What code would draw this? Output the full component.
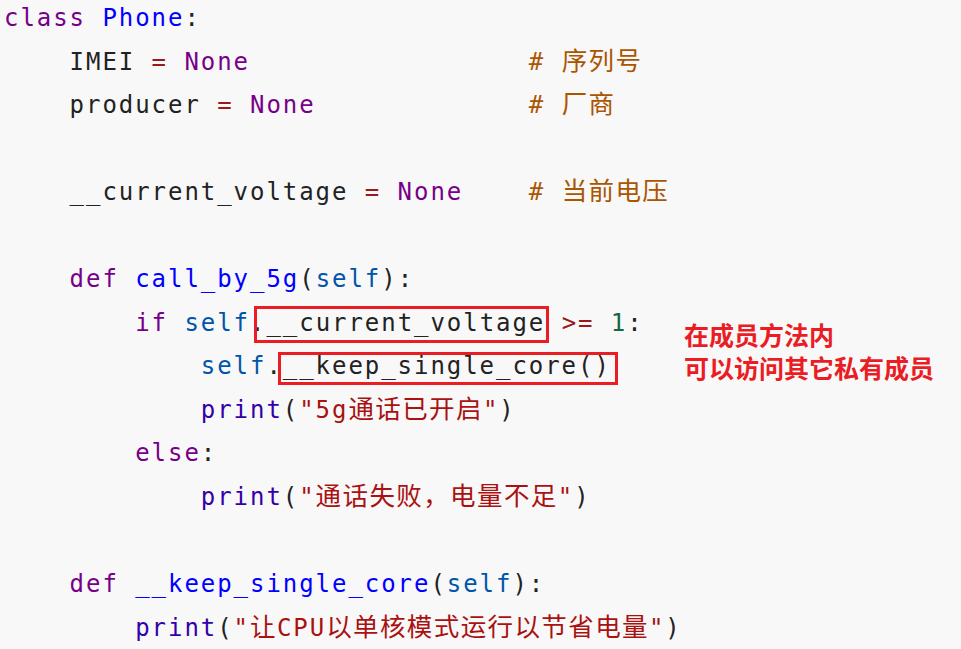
import React from "react";

const K = ({ children }: { children: React.ReactNode }) => <span className="text-[#770088]">{children}</span>;
const D = ({ children }: { children: React.ReactNode }) => <span className="text-[#0000ff]">{children}</span>;
const S = ({ children }: { children: React.ReactNode }) => <span className="text-[#0055aa]">{children}</span>;
const B = ({ children }: { children: React.ReactNode }) => <span className="text-[#3300aa]">{children}</span>;
const O = ({ children }: { children: React.ReactNode }) => <span className="text-[#981a1a]">{children}</span>;
const N = ({ children }: { children: React.ReactNode }) => <span className="text-[#116644]">{children}</span>;
const Str = ({ children }: { children: React.ReactNode }) => <span className="text-[#aa1111]">{children}</span>;
const C = ({ children }: { children: React.ReactNode }) => <span className="text-[#aa5500]">{children}</span>;
const Z = ({ children }: { children: React.ReactNode }) => (
  <span className="text-[25.5px] leading-none tracking-[1.4px] [font-family:'Noto_Sans_CJK_SC',sans-serif]">{children}</span>
);

const Line = ({ children }: { children?: React.ReactNode }) => (
  <div className="h-[43.55px] leading-[43.55px] whitespace-pre">{children}</div>
);

export default function App() {
  return (
    <div className="w-[961px] h-[649px] overflow-hidden bg-[#f8f8f8]">
      <div className="relative mt-[-3px] pl-[4px] text-[24px] tracking-[1.95px] text-[#222222] [font-family:'DejaVu_Sans_Mono','Noto_Sans_CJK_SC',monospace]">
        <Line>
          <K>class</K> <D>Phone</D>:
        </Line>
        <Line>
          {"    IMEI "}
          <O>=</O> <K>None</K>
          {"                 "}
          <C>
            {"# "}
            <Z>序列号</Z>
          </C>
        </Line>
        <Line>
          {"    producer "}
          <O>=</O> <K>None</K>
          {"             "}
          <C>
            {"# "}
            <Z>厂商</Z>
          </C>
        </Line>
        <Line />
        <Line>
          {"    __current_voltage "}
          <O>=</O> <K>None</K>
          {"    "}
          <C>
            {"# "}
            <Z>当前电压</Z>
          </C>
        </Line>
        <Line />
        <Line>
          {"    "}
          <K>def</K> <D>call_by_5g</D>(<S>self</S>):
        </Line>
        <Line>
          {"        "}
          <K>if</K> <S>self</S>.
          <span className="relative">
            __current_voltage
            <span className="absolute left-[-12px] right-[-4px] top-[-2.5px] bottom-[-6.5px] border-[3px] border-[#ea1c24]" />
          </span>{" "}
          <O>&gt;=</O> <N>1</N>:
        </Line>
        <Line>
          {"            "}
          <S>self</S>.
          <span className="relative">
            __keep_single_core()
            <span className="absolute left-[-5px] right-[-7px] top-[0px] bottom-[-5px] border-[3px] border-[#ea1c24]" />
          </span>
        </Line>
        <Line>
          {"            "}
          <B>print</B>(
          <Str>
            "5g<Z>通话已开启</Z>"
          </Str>
          )
        </Line>
        <Line>
          {"        "}
          <K>else</K>:
        </Line>
        <Line>
          {"            "}
          <B>print</B>(
          <Str>
            "<Z>通话失败，电量不足</Z>"
          </Str>
          )
        </Line>
        <Line />
        <Line>
          {"    "}
          <K>def</K> <D>__keep_single_core</D>(<S>self</S>):
        </Line>
        <Line>
          {"        "}
          <B>print</B>(
          <Str>
            "<Z>让</Z>CPU<Z>以单核模式运行以节省电量</Z>"
          </Str>
          )
        </Line>

        <div className="absolute left-[684px] top-[321px] text-[25px] leading-[33px] font-bold tracking-normal text-[#ea1c24] [font-family:'Noto_Sans_CJK_SC',sans-serif]">
          <div>在成员方法内</div>
          <div>可以访问其它私有成员</div>
        </div>
      </div>
    </div>
  );
}
